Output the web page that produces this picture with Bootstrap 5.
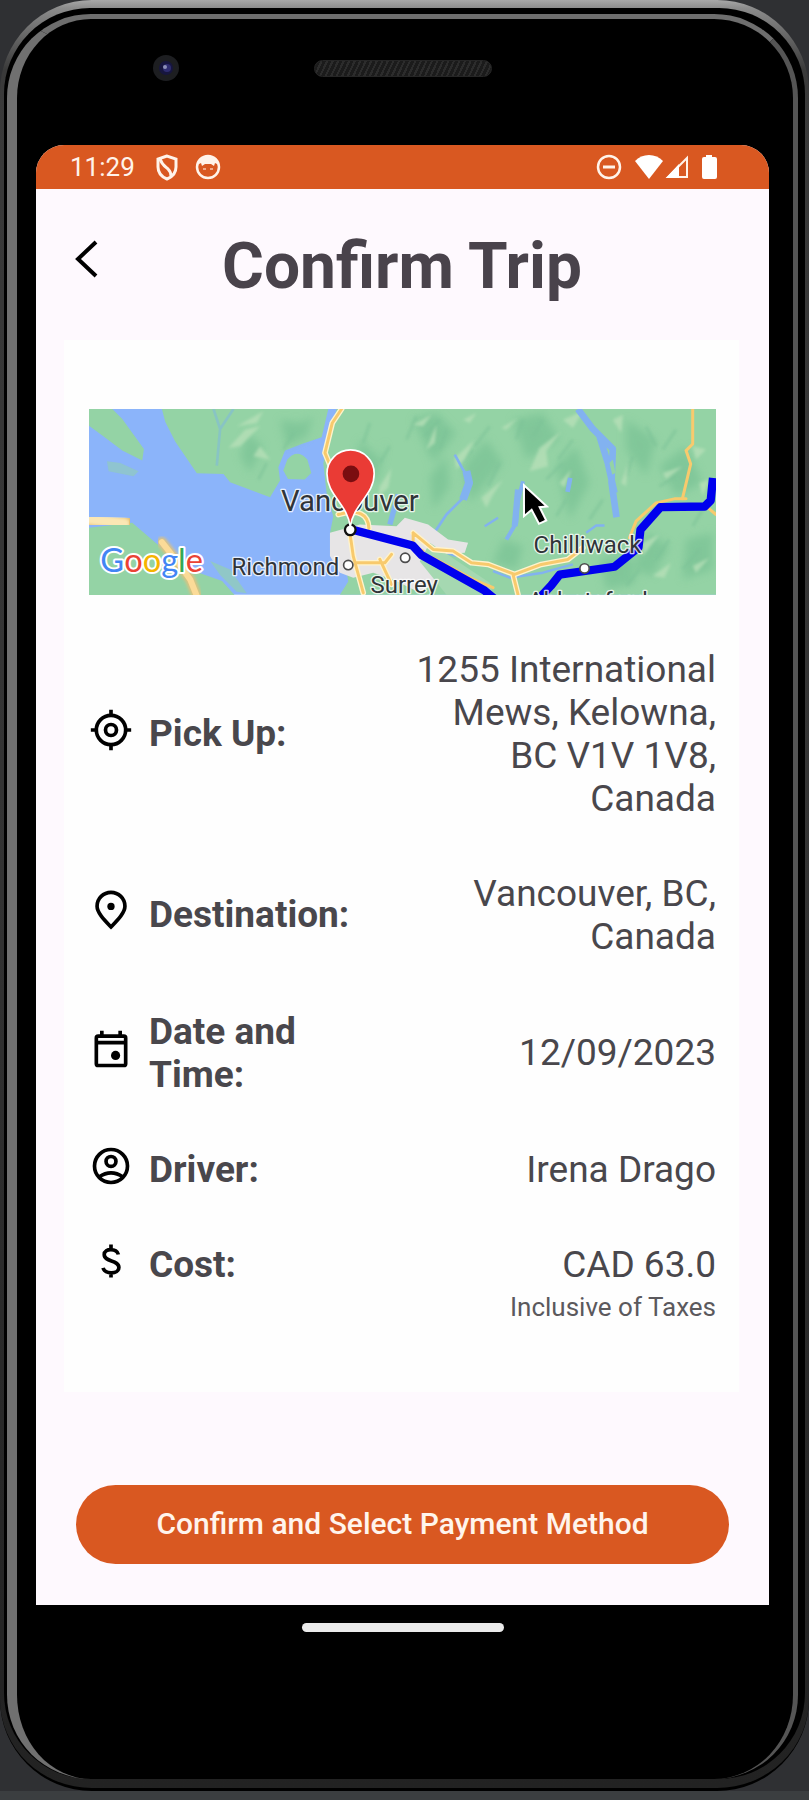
<!DOCTYPE html>
<html lang="en">
<head>
<meta charset="utf-8">
<meta name="viewport" content="width=device-width, initial-scale=1">
<title>Confirm Trip</title>
<link href="https://cdn.jsdelivr.net/npm/bootstrap@5.3.0/dist/css/bootstrap.min.css" rel="stylesheet">
<style>
  body { background: #2f3033; font-family: Roboto, "Liberation Sans", sans-serif; color: #49474c; }
  /* device casing: three nested shells */
  .shell-outer { border-radius: 92px; padding: 8px 4px 9px; background: linear-gradient(#a8a8a8 0, #8c8c8c 8px, #3a3a3a 70px, #333 50%, #222 100%); border-bottom: 3px solid #000; }
  .shell-mid { border-radius: 86px; background: #000; padding: 6px 7px 0 3px; }
  .shell-inner { border-radius: 84px; background: #000; border-style: solid; border-width: 5px 5px 0 10px; border-color: #6e6e6e #555 #000 #707070; padding: 0 24px 0 19px; }
  .desk-edge { height: 10px; background: #3b3e40; }
  .top-bezel { height: 126px; padding-bottom: 28px; }
  .speaker { width: 178px; height: 17px; background: repeating-linear-gradient(115deg, #2c2c2c 0 2px, #1b1b1b 2px 5px); border: 1px solid #262626; }
  .camera { width: 26px; height: 26px; left: 16%; }
  .bottom-bezel { height: 174px; padding-top: 18px; }
  .home-bar { width: 202px; height: 9px; background: #ebebeb; }
  .screen { background: #fef9fe; border-radius: 28px 28px 0 0; }
  .status-bar { height: 44px; background: #d95821; color: #fff3ea; font-size: 26px; line-height: 30px; padding: 0 48px 0 34px; }
  .app-header { grid-template-columns: 1fr auto 1fr; height: 151px; padding: 4px 40px 0 39px; }
  .app-header h1 { font-size: 64px; line-height: 76px; font-weight: 700; color: #49434b; }
  .back-btn { width: 44px; height: 44px; margin-bottom: 16px; }
  .trip-card { background: #fefefe; margin: 0 30px 0 28px; padding: 69px 23px 70px 25px; }
  .trip-map { font-family: Roboto, "Liberation Sans", sans-serif; }
  .trip-list { font-size: 37px; line-height: 43px; gap: 52px; margin-top: 53px; }
  .trip-row { display: grid; grid-template-columns: 44px 2fr 3fr; column-gap: 16px; align-items: center; }
  .trip-row svg { margin: -4px 0 3px; color: #000; }
  .trip-row dd { padding-left: 24px; }
  .tax-note { font-size: 26px; line-height: 30px; margin-top: 6px; color: #5b595d; }
  .confirm-area { padding: 93px 40px 41px; }
  .confirm-btn { height: 79px; background: #d95821; color: #fff4ec; font-size: 30px; line-height: 34px; font-weight: 500; border: 0; }
  .confirm-btn:hover { background: #c24c1a; color: #fff; }
</style>
</head>
<body>
<div class="shell-outer">
 <div class="shell-mid">
  <div class="shell-inner">
   <div class="top-bezel d-flex align-items-center position-relative justify-content-center">
     <svg class="camera position-absolute" viewBox="0 0 26 26" aria-hidden="true"><circle cx="13" cy="13" r="13" fill="#1d1e21"/><circle cx="13" cy="13" r="7" fill="#17163f"/><circle cx="14" cy="13" r="4" fill="#2e2c70"/><circle cx="12" cy="12" r="2" fill="#8c90b8"/></svg>
     <div class="speaker rounded-pill"></div>
   </div>

   <main class="screen overflow-hidden">
     <div class="status-bar d-flex align-items-center">
       <span>11:29</span>
       <svg class="ms-3" width="32" height="30" viewBox="0 0 32 30" fill="none" stroke="#fff3ea" stroke-width="3" aria-label="Shield"><path d="M16 4 7 7v8c0 6 4 10 9 12 5-2 9-6 9-12V7z"/><path d="M9 7c2 6 6 8 8 10s3 4 3 7"/></svg>
       <svg class="ms-2" width="32" height="30" viewBox="0 0 32 30" aria-label="Notification"><circle cx="17" cy="15" r="11" fill="none" stroke="#fff3ea" stroke-width="2.5"/><path d="M6 13C7 1 27 1 28 13l-4-2-1 3-3-2h-6l-3 2-1-3z" fill="#fff3ea"/><path d="M12 17h3m4 0h3" stroke="#f0a888" stroke-width="2"/></svg>
       <div class="ms-auto d-flex align-items-center">
         <svg width="26" height="26" viewBox="0 0 26 26" fill="none" stroke="#fff3ea" stroke-width="2.5" aria-label="Do not disturb"><circle cx="13" cy="13" r="11"/><path d="M7 13h12" stroke-width="3"/></svg>
         <svg class="ms-2" width="34" height="26" viewBox="0 0 34 26" fill="#fff" aria-label="Wi-Fi"><path d="M5 7C12-1 26-1 33 7L19 25z"/></svg>
         <svg width="25" height="26" viewBox="0 0 25 26" aria-label="Signal"><path d="M23 4v19H4z" fill="none" stroke="#fff3ea" stroke-width="2"/><path d="M2 24 15 10v14z" fill="#fff"/></svg>
         <svg class="ms-2" width="24" height="26" viewBox="0 0 24 26" fill="#fff" aria-label="Battery"><path d="M9 1h6v2h3q2 0 2 2v18q0 2-2 2H7q-2 0-2-2V5q0-2 2-2h2z"/></svg>
       </div>
     </div>

     <header class="app-header d-grid align-items-center">
       <button type="button" class="back-btn btn p-0 border-0 d-flex align-items-center justify-content-start" aria-label="Back">
         <svg width="24" height="40" viewBox="0 0 24 40" fill="none" stroke="#000" stroke-width="4"><path d="M21 3 3 20l18 17"/></svg>
       </button>
       <h1 class="m-0">Confirm Trip</h1>
     </header>

     <section class="trip-card">
       <svg class="trip-map d-block w-100" viewBox="26 28 1884 558" role="img" aria-label="Route map">
         <defs><filter id="soft"><feGaussianBlur stdDeviation="4"/></filter><filter id="softer"><feGaussianBlur stdDeviation="12"/></filter></defs>
         <rect x="26" y="28" width="1884" height="558" fill="#8bb4fa"/>
         <g fill="#94d3a5">
           <path d="M26 28h70l30 30 65 90-5 35-60-30-60-45-40-30z"/>
           <path d="M80 185l40 5 55 25-15 15-75-15z" opacity=".5"/>
           <path d="M245 28h500l-20 85-60 20-50 20-20 50 5 40-30 50-120-45-20-25-80-2-65-95-30-60z"/>
           <path d="M622 180q30-35 60 0l12 40-20 20-50-2-14-25z"/>
           <path d="M26 385l130-15 70 60 60 50 70 40 70 25 40 45H26z"/>
           <path d="M390 485l60 25 50 72-30-5-50-50z" opacity=".6"/>
           <path d="M770 28h1140v558H780l25-40-10-60-45-85 10-50-20-70-10-90z"/>
         </g>
         <path d="M400 28l20 60-10 110M460 28l-40 60" stroke="#83bdd2" stroke-width="8" fill="none" opacity=".7"/>
         <!-- terrain relief -->
         <g fill="#74bf92" opacity=".6" filter="url(#softer)">
           <path d="M600 60l60 10 40-20-20 60-60 30zM500 100l50 40-40 80-30-50zM840 120l60 60 20-60-30 130-60-60zM1000 60l70-20 60 60-70 90zM1150 200l70-80 50 70-100 120zM1300 60l90-20 50 80-100 60zM1430 200l60-60 40 110-60 110zM1640 60l90 60-30 110-60-80zM1740 200l80-60 50 110-80 40zM1050 230l50-60 10 90-50 70zM1700 400l70 40-50 90-60-20zM1560 480l90-20 20 90-90 20zM1820 420l80-20v110l-90 30zM1270 420l60 20-20 70-70-20z"/>
         </g>
         <g fill="none" stroke="#7cc297" stroke-width="9" opacity=".6" filter="url(#soft)">
           <path d="M1010 50l-30 70M1080 60l-45 50M1100 90l-20 60M1180 150l-35 40M1230 80l-45 60M1330 60l-20 60M1390 60l-30 50M1260 190l-35 70M1400 240l50-50M1480 120l-45 60M1570 300l-40 60M1460 300l-30 50M1660 170l-20 60M1700 80l30 60M1790 90l-40 60M1790 230l-50 30M1870 330l-30 50M1770 420l-40 60M1680 510l-40 50M1860 450l-50 60M870 70l-20 60M930 140l-30 50M640 100l-30 50M560 190l-25 50"/>
         </g>
         <g fill="#b7e0b8" opacity=".8" filter="url(#soft)">
           <path d="M445 145l50-55 45-10-60 60zM470 80l80-45-20 35zM520 170l20-30 30 40zM900 260l35-55-10 60-30 25zM1000 75l55-30-25 35zM1040 150l30-75-5 55zM1125 175l60-55-30 60-25 30zM1205 295l65-55-30 45-20 40zM1265 85l50-30-35 35zM1350 215l30-70 65-50-45 60 5 45zM1450 60l60-25-30 50zM1600 60l30-15-5 55zM1625 250l20-60-5 70zM1840 140l40 10-30 30zM1750 220l60-20-50 40zM1690 430l50-25-50 65zM1720 530l55-40-20 45zM1840 500l50-25-40 45zM1860 250l30-10-20 50zM1440 250l35-40-20 55zM1150 60l40-20-20 30z"/>
         </g>
         <!-- lakes and inlets -->
         <g fill="none" stroke="#82b2f0" stroke-linejoin="round">
           <path d="M1125 165l25 45 20 30-15 50-55 55-40 60" stroke-width="8"/>
           <path d="M1160 215l8 35-18 50" stroke-width="24"/>
           <path d="M1330 245l-15 60-5 65-30 50" stroke-width="12"/><path d="M1315 270l-10 110" stroke-width="18"/>
           <path d="M1472 235l-8 42" stroke-width="14"/>
           <path d="M1495 28l45 60 60 60-4 100 15 105M1560 110l25 80 20 90" stroke-width="20"/>
           <path d="M1520 400l30-22 25 0M1255 355l-40 25M1040 440l90 30M960 460l100 25M1240 515l50 20 100-15 90-25" stroke-width="7"/>
           <path d="M930 375l25-90" stroke-width="16"/>
         </g>
         <path d="M1590 190l10-10 8 40-10 5z" fill="#94d3a5"/>
         <!-- urban area -->
         <path d="M750 400l90-25 110 5 25-25 70 20 60 45 60 10-10 30-90 5 25 70-70 45-80-40-60-20-60 15-40-15-30-50z" fill="#e7e5e6"/>
         <path d="M1050 430l90 60 90 60 10 36H1100l-40-50-40-50z" fill="#a5d8b1"/>
         <!-- roads -->
         <g fill="none" stroke-linejoin="round" stroke-linecap="round">
           <path d="M10 358l125 16" stroke-width="52" stroke="#e6c276" filter="url(#soft)"/><path d="M10 356l122 16" stroke-width="32" stroke="#fbe7b4" filter="url(#soft)"/>
           <path d="M245 428l45 57 40 55 20 50" stroke="#dec27e" stroke-width="30" filter="url(#soft)"/><path d="M245 428l45 57 40 55 20 50" stroke="#fbdb98" stroke-width="18"/>
           <g stroke="#fff3cc" stroke-width="17"><path d="M785 28l-28 42-22 90 25 60M775 345q90-25 92 42M810 400l10 70 30 110M830 490h85l20-25M900 480l35 75M1000 400l60 50 60 5 55 35 50 5 80 30 80-30 80-15 45-35M1300 525l15 60"/></g>
           <g stroke="#f8ca6d" stroke-width="9"><path d="M785 28l-28 42-22 90 25 60M775 345q90-25 92 42M810 400l10 70 30 110M830 490h85l20-25M900 480l35 75M1000 400l60 50 60 5 55 35 50 5 80 30 80-30 80-15 45-35M1650 415l20-50 60-55 55-12h35M1300 525l15 60M1000 400v40l30 15M1840 28v105l-20 20 14 40-25 105M1880 320l30 25M1060 475l120 65 60 25"/></g>
         </g>
         <path d="M815 390l183 48 26 28 190 107 30 25M1385 590l30-32 25-32 165-24 40-32 32-26 6-53 60-68 133-2 18-18 7-68" fill="none" stroke="#0000ee" stroke-width="25" stroke-linejoin="round"/>
         <!-- place labels -->
         <g fill="#303438" stroke="#fff" stroke-width="8" stroke-opacity=".8" paint-order="stroke" stroke-linejoin="round">
           <text x="603" y="335" font-size="88">Vancouver</text>
           <text x="454" y="527" font-size="72">Richmond</text>
           <text x="872" y="582" font-size="72">Surrey</text>
           <text x="1362" y="461" font-size="72">Chilliwack</text>
           <text x="1345" y="630" font-size="72">Abbotsford</text>
         </g>
         <g fill="#fff" stroke="#4c4c4c" stroke-width="5"><circle cx="805" cy="497" r="14"/><circle cx="976" cy="475" r="14"/><circle cx="1515" cy="507" r="14"/><circle cx="811" cy="391" r="16" stroke="#111" stroke-width="7"/></g>
         <path d="M811 382c-8-70-70-95-70-160a71 71 0 0 1 142 0c0 65-62 90-72 160z" fill="#ea3b35" stroke="#fff" stroke-width="5"/>
         <circle cx="813" cy="223" r="25" fill="#7a0d10"/>
         <text x="60" y="518" font-size="98" font-family="Lato, sans-serif" stroke="#fff" stroke-width="12" paint-order="stroke" stroke-linejoin="round"><tspan fill="#4285f4">G</tspan><tspan fill="#ea4335">o</tspan><tspan fill="#f5b400">o</tspan><tspan fill="#4285f4">g</tspan><tspan fill="#34a853">l</tspan><tspan fill="#ea4335">e</tspan></text>
         <!-- pointer -->
         <path d="M1333 257v93l23-19 22 42 22-10-20-40 22-2z" fill="#000" stroke="#fff" stroke-width="6"/>
       </svg>

       <dl class="trip-list d-flex flex-column mb-0">
         <div class="trip-row">
           <svg width="44" height="44" viewBox="0 0 24 24" fill="none" stroke="currentColor" stroke-width="2" aria-hidden="true"><circle cx="12" cy="12" r="8"/><circle cx="12" cy="12" r="3"/><path d="M12 1v3M12 20v3M1 12h3M20 12h3"/></svg>
           <dt>Pick Up:</dt>
           <dd class="m-0 text-end">1255 International Mews, Kelowna, BC V1V 1V8, Canada</dd>
         </div>
         <div class="trip-row">
           <svg width="44" height="44" viewBox="0 0 24 24" fill="none" stroke="currentColor" stroke-width="2" aria-hidden="true"><path d="M12 20.700C8 16.500 4.400 12.800 4.400 9.400a7.600 7.600 0 0 1 15.200 0c0 3.400-3.600 7.100-7.600 11.300z"/><circle cx="12" cy="9.500" r="2" fill="currentColor" stroke="none"/></svg>
           <dt>Destination:</dt>
           <dd class="m-0 text-end">Vancouver, BC, Canada</dd>
         </div>
         <div class="trip-row">
           <svg width="44" height="44" viewBox="0 0 24 24" fill="none" stroke="currentColor" stroke-width="2" aria-hidden="true"><rect x="4" y="5" width="16" height="16" rx="1"/><path d="M4 8.500h16M7 2v3M17 2v3"/><circle cx="14.500" cy="15.500" r="2.500" fill="currentColor" stroke="none"/></svg>
           <dt>Date and Time:</dt>
           <dd class="m-0 text-end">12/09/2023</dd>
         </div>
         <div class="trip-row">
           <svg width="44" height="44" viewBox="0 0 24 24" fill="none" stroke="currentColor" stroke-width="2" aria-hidden="true"><circle cx="12" cy="12" r="9"/><circle cx="12" cy="9.500" r="2.700"/><path d="M5.500 18q6.500-4.500 13 0"/></svg>
           <dt>Driver:</dt>
           <dd class="m-0 text-end">Irena Drago</dd>
         </div>
         <div class="trip-row align-items-start">
           <svg width="44" height="44" viewBox="0 0 24 24" fill="none" stroke="currentColor" stroke-width="2" aria-hidden="true"><path d="M12 3v3M12 18v3M16 8.500C15.500 5 8.300 4.800 8.300 8.500c0 4.200 8 2.700 8 7 0 3.900-7.900 3.900-8.600.3"/></svg>
           <dt>Cost:</dt>
           <dd class="m-0 text-end">CAD 63.0<div class="tax-note">Inclusive of Taxes</div></dd>
         </div>
       </dl>
     </section>

     <div class="confirm-area">
       <button type="button" class="confirm-btn btn rounded-pill w-100">Confirm and Select Payment Method</button>
     </div>
   </main>

   <div class="bottom-bezel"><div class="home-bar rounded-pill mx-auto"></div></div>
  </div>
 </div>
</div>
<div class="desk-edge"></div>
<script src="https://cdn.jsdelivr.net/npm/bootstrap@5.3.0/dist/js/bootstrap.bundle.min.js"></script>
</body>
</html>
